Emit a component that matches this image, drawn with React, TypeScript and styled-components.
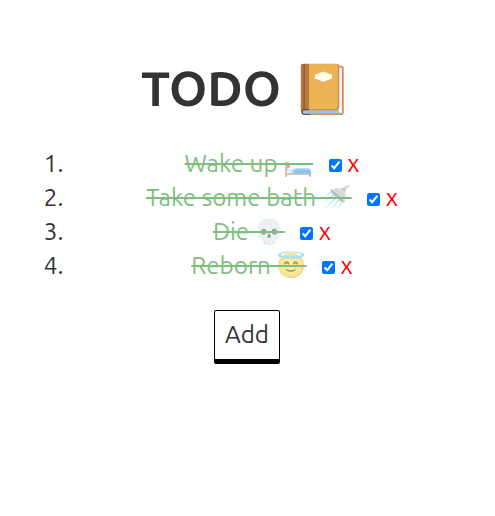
import React, { useState } from "react";
import styled, { createGlobalStyle } from "styled-components";

const GlobalStyle = createGlobalStyle`
  body {
    margin: 0;
    background: #fff;
    color: #333;
    font-family: Ubuntu, "Open Sans", "Noto Color Emoji", sans-serif;
    font-size: 24.2px;
    line-height: 34px;
  }
`;

const Page = styled.main`
  padding: 58px 20px 0;
  text-align: center;
`;

const Title = styled.h1`
  margin: 0 1px 28px 0;
  font-size: 48.6px;
  line-height: 60px;
  font-weight: 700;
`;

const List = styled.ol`
  margin: 0 0 28px;
  padding: 0 0 0 49px;
  list-style: decimal;
`;

const Item = styled.li`
  height: 34px;
`;

const Label = styled.span<{ $done: boolean }>`
  margin-right: 10px;
  color: ${(p) => (p.$done ? "green" : "inherit")};
  opacity: ${(p) => (p.$done ? 0.5 : 1)};
  text-decoration: ${(p) => (p.$done ? "line-through" : "none")};
`;

const Check = styled.input`
  width: 13px;
  height: 13px;
  margin: 3px 5.4px 3px 5.6px;
`;

const Remove = styled.span`
  color: red;
  cursor: pointer;
`;

const AddButton = styled.button`
  height: 54px;
  margin-right: 1px;
  padding: 0 10px 2px;
  border: 1px solid #000;
  border-bottom-width: 5px;
  border-radius: 2px;
  background: #fff;
  color: #333;
  font: inherit;
  cursor: pointer;
`;

const initial = [
  { text: "Wake up 🛏️", done: true },
  { text: "Take some bath 🚿", done: true },
  { text: "Die 💀", done: true },
  { text: "Reborn 😇", done: true },
];

export default function App() {
  const [items, setItems] = useState(initial);
  const toggle = (index: number) =>
    setItems(items.map((item, i) => (i === index ? { ...item, done: !item.done } : item)));
  const remove = (index: number) => setItems(items.filter((_, i) => i !== index));

  return (
    <>
      <GlobalStyle />
      <Page>
        <Title>TODO 📔</Title>
        <List>
          {items.map((item, i) => (
            <Item key={item.text}>
              <Label $done={item.done}>{item.text}</Label>
              <Check type="checkbox" checked={item.done} onChange={() => toggle(i)} />
              <Remove onClick={() => remove(i)}>x</Remove>
            </Item>
          ))}
        </List>
        <AddButton>Add</AddButton>
      </Page>
    </>
  );
}
